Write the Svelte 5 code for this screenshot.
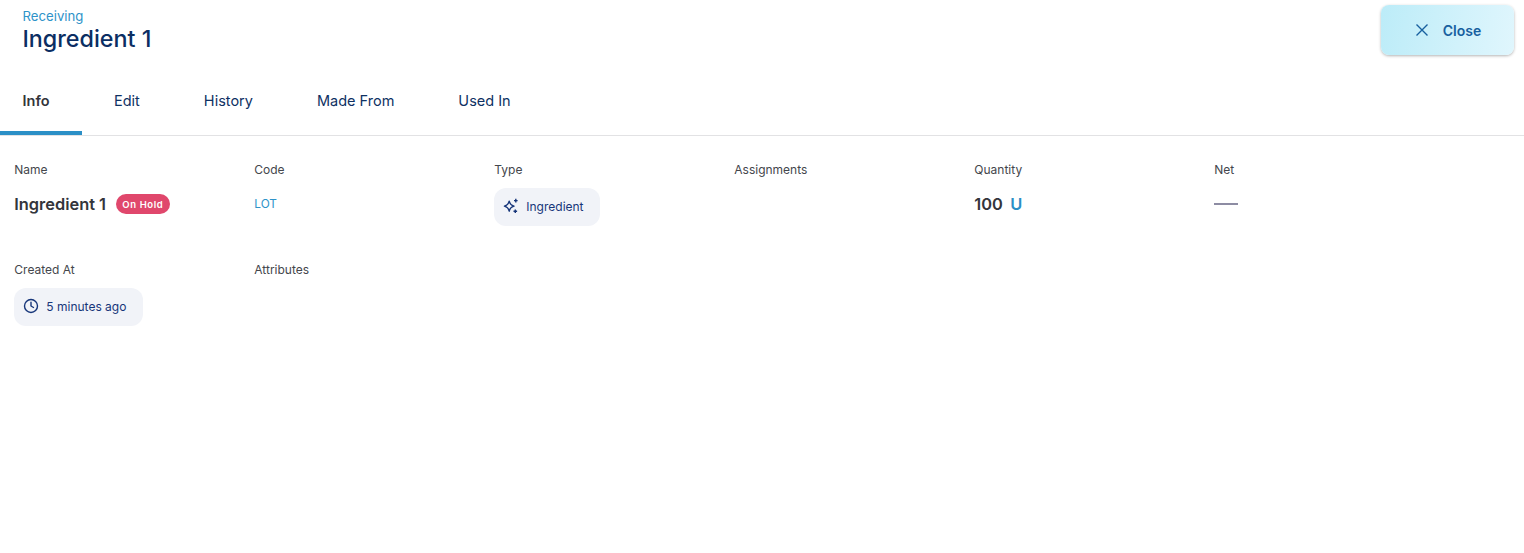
<script>
  const tabs = ['Info', 'Edit', 'History', 'Made From', 'Used In'];
</script>

<div class="page">
  <header class="head">
    <div class="titles">
      <div class="crumb">Receiving</div>
      <h1>Ingredient 1</h1>
    </div>
    <button class="close">
      <svg width="16" height="16" viewBox="0 0 16 16" fill="none" stroke="#17609f" stroke-width="1.4"><path d="M2.5 2.5l11 11M13.5 2.5l-11 11"/></svg>
      <span>Close</span>
    </button>
  </header>

  <nav class="tabs">
    {#each tabs as t, i}
      <div class="tab" class:active={i === 0}>{t}</div>
    {/each}
  </nav>

  <section class="grid">
    <div class="cell">
      <div class="label">Name</div>
      <div class="val">
        <span class="big">Ingredient 1</span>
        <span class="badge">On Hold</span>
      </div>
    </div>
    <div class="cell">
      <div class="label">Code</div>
      <div class="val"><span class="lot">LOT</span></div>
    </div>
    <div class="cell">
      <div class="label">Type</div>
      <div class="val chipval">
        <span class="chip">
          <svg width="16" height="16" viewBox="0 0 16 16" fill="none" stroke="#17367a" stroke-width="1.4" stroke-linejoin="round"><path d="M6.200 3.200c.7 3 1.900 4.200 4.800 5-2.900.8-4.100 2-4.800 5-.7-3-1.900-4.200-4.800-5 2.900-.8 4.100-2 4.800-5z"/><path d="M12.800 .800v3.600M11 2.600h3.600M12.300 11.500v3.600M10.500 13.300h3.600" stroke-width="1.400"/></svg>
          Ingredient
        </span>
      </div>
    </div>
    <div class="cell">
      <div class="label">Assignments</div>
    </div>
    <div class="cell">
      <div class="label">Quantity</div>
      <div class="val"><span class="big">100</span><span class="unit">U</span></div>
    </div>
    <div class="cell">
      <div class="label">Net</div>
      <div class="val"><span class="dash"></span></div>
    </div>
    <div class="cell">
      <div class="label">Created At</div>
      <div class="val chipval">
        <span class="chip">
          <svg width="16" height="16" viewBox="0 0 16 16" fill="none" stroke="#17367a" stroke-width="1.4" stroke-linecap="round" stroke-linejoin="round"><circle cx="8" cy="8" r="6.500"/><path d="M8 4.200V8l2.500 1.500"/></svg>
          5 minutes ago
        </span>
      </div>
    </div>
    <div class="cell">
      <div class="label">Attributes</div>
    </div>
  </section>
</div>

<style>
  :global(body) {
    margin: 0;
    background: #fff;
    font-family: Inter, "Liberation Sans", sans-serif;
  }
  .page {
    height: 553px;
    overflow: hidden;
  }
  .head {
    display: flex;
    justify-content: space-between;
    align-items: flex-start;
    padding: 5px 10px 0 22.500px;
    height: 67px;
    box-sizing: border-box;
  }
  .crumb {
    font-size: 13.200px;
    line-height: 22px;
    color: #2e93c9;
  }
  h1 {
    margin: 0;
    font-size: 23.300px;
    line-height: 24px;
    font-weight: 500;
    color: #0b2e63;
  }
  .close {
    display: flex;
    align-items: center;
    justify-content: center;
    gap: 13px;
    width: 133px;
    height: 50px;
    border: 0;
    border-radius: 8px;
    background: linear-gradient(100deg, #bcecf8, #e0f6fd);
    box-shadow: 0 1px 3px rgba(0, 0, 0, 0.3);
    color: #17609f;
    font: 600 14px Inter, sans-serif;
  }
  .tabs {
    display: flex;
    height: 69px;
    box-sizing: border-box;
    border-bottom: 1px solid #e2e2e4;
  }
  .tab {
    height: 66px;
    box-sizing: border-box;
    padding: 0 32px;
    display: flex;
    align-items: center;
    font-size: 14.500px;
    color: #0e3163;
  }
  .tab:first-child {
    width: 82px;
    padding: 0 0 0 22.500px;
  }
  .tab.active {
    height: 68px;
    color: #33353b;
    font-weight: 600;
    padding-top: 3px;
    border-bottom: 4px solid #2b8fc6;
    border-radius: 0 4px 0 0;
  }
  .grid {
    display: grid;
    grid-template-columns: repeat(6, 240px);
    grid-auto-rows: 100px;
    padding: 26px 0 0 14.300px;
  }
  .label {
    font-size: 12px;
    line-height: 16px;
    color: #44464c;
  }
  .val {
    display: flex;
    align-items: center;
    height: 20px;
    margin-top: 16px;
  }
  .chipval {
    margin-top: 10px;
    height: 38px;
    align-items: flex-start;
  }
  .big {
    font-size: 16.400px;
    font-weight: 600;
    color: #33353b;
  }
  .badge {
    margin-left: 9.500px;
    height: 20px;
    padding: 0 6.800px;
    display: inline-flex;
    align-items: center;
    border-radius: 10px;
    background: #e0476c;
    color: #fff;
    font-size: 9.500px;
    font-weight: 600;
    letter-spacing: 0.6px;
  }
  .lot {
    font-size: 11.800px;
    color: #2e93c9;
  }
  .unit {
    margin-left: 7.500px;
    font-size: 16.400px;
    font-weight: 600;
    color: #2b8fc6;
  }
  .dash {
    flex: none;
    width: 24px;
    height: 2px;
    background: #8d8ca3;
  }
  .chip {
    display: inline-flex;
    align-items: center;
    gap: 7.500px;
    height: 38px;
    padding: 0 16.500px 2px 8.500px;
    box-sizing: border-box;
    border-radius: 12px;
    background: #f1f3f8;
    font-size: 12px;
    color: #17367a;
  }
</style>
